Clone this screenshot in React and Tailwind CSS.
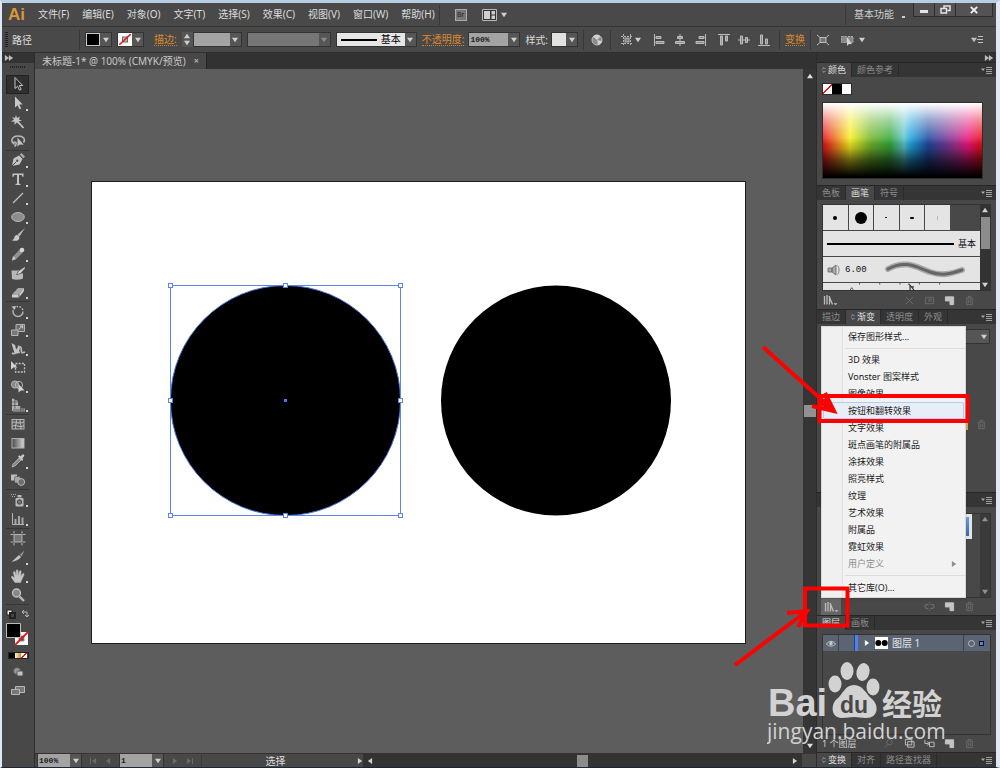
import clsx from 'clsx'

const MENUS = [
  '文件(F)',
  '编辑(E)',
  '对象(O)',
  '文字(T)',
  '选择(S)',
  '效果(C)',
  '视图(V)',
  '窗口(W)',
  '帮助(H)',
]

const LIBRARY_ITEMS = [
  '3D 效果',
  'Vonster 图案样式',
  '图像效果',
  '按钮和翻转效果',
  '文字效果',
  '斑点画笔的附属品',
  '涂抹效果',
  '照亮样式',
  '纹理',
  '艺术效果',
  '附属品',
  '霓虹效果',
]

// Tools as they are grouped between the separators of the bar.
const TOOL_GROUPS = [
  { height: 'h-[76px]', tools: ['select', 'direct', 'wand', 'lasso'] },
  {
    height: 'h-[151px]',
    tools: ['pen', 'type', 'line', 'ellipse', 'brush', 'pencil', 'blob', 'eraser'],
  },
  {
    height: 'h-[113px]',
    tools: ['rotate', 'scale', 'warp', 'transform', 'builder', 'perspective'],
  },
  { height: 'h-[75px]', tools: ['mesh', 'gradient', 'dropper', 'blend'] },
  { height: 'h-[39px]', tools: ['spray', 'graph'] },
  { height: 'h-[76px]', tools: ['artboard', 'slice', 'hand', 'zoom'] },
]

const FLYOUTS = new Set([
  'direct', 'pen', 'type', 'line', 'ellipse', 'pencil', 'eraser', 'rotate', 'scale',
  'warp', 'builder', 'perspective', 'dropper', 'spray', 'graph', 'slice', 'hand',
])

const TOOL_ART = {
  select: <path d="M5 1.5v11l2.6-2.3 1.9 4 1.7-.8-1.9-3.9h3.4z" fill="#2a2a2a" stroke="#c4c4c4" />,
  direct: <path d="M5 1.5v11l2.6-2.3 1.9 4 1.7-.8-1.9-3.9h3.4z" fill="#c8c8c8" />,
  wand: (
    <>
      <path d="M6 1l1 3 3-1.6L8.800 5.500 12 6.500 8.800 7.500 9.500 10.500 6.800 8.500 4.500 11 4.600 7.800 1 7.500 4 5.600 2 3l3 .9z" fill="#c4c4c4" />
      <path d="M8.500 8.500l5 5.500" stroke="#c4c4c4" strokeWidth="1.800" />
    </>
  ),
  lasso: (
    <>
      <path d="M4.500 11C0 9 1.500 3 8 3c6 0 7.500 3.500 5.500 6.500M4.500 11c-1.500 0-1.500-2 .3-2s2 2.700-.3 4.500" fill="none" stroke="#b8b8b8" strokeWidth="1.600" />
      <path d="M7.500 4.500v9l2.200-2 4 .3z" fill="#c4c4c4" />
    </>
  ),
  pen: (
    <>
      <path d="M2 14l1.500-7.500L9 3.500l3.500 3.500L9.500 12.500z" fill="#c4c4c4" />
      <path d="M9.800 2.800L11.500 1 15 4.500l-1.700 1.800z" fill="#a8a8a8" />
      <path d="M2 14l4.500-4.500" stroke="#484848" />
      <circle cx="7.300" cy="8.700" r="1.100" fill="#444" />
    </>
  ),
  type: <path d="M2.500 2.500h11v3.200h-1l-.8-1.700H9v8.400l1.500.8v.8h-5v-.8L7 12.400V4H4.300l-.8 1.700h-1z" fill="#c4c4c4" />,
  line: <path d="M3 13L13 3" stroke="#c0c0c0" strokeWidth="1.300" />,
  ellipse: <ellipse cx="8" cy="8" rx="6.300" ry="4.500" fill="#8c8c8c" stroke="#b8b8b8" />,
  brush: (
    <>
      <path d="M15 1L7.500 7.500l2 2z" fill="#b8b8b8" />
      <path d="M8.500 8.500C6 6.800 4.500 9 4.200 11c-.3 1.500-1.700 2-2.700 2 3 1.500 7.500 1 7.800-1.500.1-1 0-2-.8-3z" fill="#c8c8c8" />
    </>
  ),
  pencil: (
    <>
      <path d="M2 14.500l1-4L10 3.300l3 3-7 7z" fill="#909090" />
      <path d="M2 14.500l1-4 1.500.5.500 1.600 1 .5z" fill="#c8c8c8" />
      <circle cx="12" cy="4" r="2.300" fill="#d4d4d4" />
    </>
  ),
  blob: (
    <>
      <path d="M1.500 5.500H9v3h4v5c-3 1.500-8 1.500-11 .5z" fill="#b8b8b8" />
      <path d="M15 1.500L8.500 6 6.500 9.800l4-1.300 4.500-5z" fill="#d4d4d4" stroke="#484848" strokeWidth=".7" />
    </>
  ),
  eraser: (
    <>
      <path d="M2 10.500L8 4h6l-5 6.500z" fill="#a8a8a8" />
      <path d="M2 10.500h7L14 4v3l-5 6.500H2z" fill="#d0d0d0" />
      <path d="M9 10.500v3" stroke="#555" />
    </>
  ),
  rotate: (
    <>
      <circle cx="8" cy="8.500" r="5" fill="none" stroke="#b4b4b4" strokeWidth="1.500" strokeDasharray="17 1.500 1.500 1.500 1.500 1.500 1.500 1.500 1.500 1.500" />
      <path d="M1.500 3.500l4.500-.5-1.500 4z" fill="#c0c0c0" />
    </>
  ),
  scale: (
    <>
      <path d="M6 2.500h8.500v7H6z" fill="#6a6a6a" stroke="#b4b4b4" />
      <path d="M1.500 8H8v5.500H1.500z" fill="#777" stroke="#b4b4b4" />
      <path d="M8.500 7.500l4-3.500M10 4h2.700v2.500" fill="none" stroke="#d0d0d0" />
    </>
  ),
  warp: (
    <>
      <path d="M2 12c2.500 2 4-1 5-3s3-5 4-2-1 6 4 4" fill="none" stroke="#b8b8b8" strokeWidth="1.800" />
      <path d="M1.500 2l3.500 2 1 4 2.500 3-4 .5-1.500-4zM8 3.500l2 4.500-2.500 3M4 13l5-4 1 3z" fill="#c4c4c4" />
    </>
  ),
  transform: (
    <>
      <rect x="5.500" y="4.500" width="9" height="8.500" fill="none" stroke="#c0c0c0" strokeWidth="1.300" strokeDasharray="2 1.200" />
      <path d="M1 2v8.500L3.400 8.500l4 .1z" fill="#d0d0d0" />
    </>
  ),
  builder: (
    <>
      <circle cx="5" cy="6.500" r="3.600" fill="#888" stroke="#b8b8b8" />
      <circle cx="9" cy="7" r="3.600" fill="none" stroke="#b8b8b8" />
      <path d="M8.500 6v8.500l2.400-2 3.600.1z" fill="#d4d4d4" />
    </>
  ),
  perspective: (
    <>
      <path d="M2 1.500l2.500.6v12H2zM5.300 3L8 4v10H5.300z" fill="#b4b4b4" />
      <path d="M8 9h2.500v5H8zM3 11.500h12v3H3z" fill="#a8a8a8" />
      <path d="M2 5h6M2 8.500h8M10.700 9v5.500M13 11.500v3M3 13h12" stroke="#505050" strokeWidth=".7" />
    </>
  ),
  mesh: (
    <>
      <rect x="2" y="3.500" width="12" height="9.500" fill="#5a5a5a" stroke="#b4b4b4" />
      <path d="M2 7c3-3 5 2 12-1M2 10.500c4-3 7 2 12-1M6 3.500c2 3-2 6 0 9.500M10.500 3.500c-2 4 2 6 0 9.500" fill="none" stroke="#c4c4c4" />
    </>
  ),
  gradient: (
    <>
      <defs>
        <linearGradient id="tool-gradient">
          <stop offset="0" stopColor="#4a4a4a" />
          <stop offset="1" stopColor="#d8d8d8" />
        </linearGradient>
      </defs>
      <rect x="2" y="3.500" width="12" height="9.500" fill="url(#tool-gradient)" stroke="#b0b0b0" />
    </>
  ),
  dropper: (
    <>
      <path d="M2 14l1-3 6-6 2 2-6 6z" fill="#8a8a8a" stroke="#b8b8b8" strokeWidth=".8" />
      <path d="M8 3.500l1.200-1.200 1.300 1L12.500 1.500c1-.6 2.300.8 1.600 1.800L12.300 5.500l1 1.200L12 8z" fill="#c8c8c8" />
    </>
  ),
  blend: (
    <>
      <rect x="1" y="2.500" width="6" height="6" fill="#bcbcbc" />
      <rect x="4.500" y="4.500" width="6" height="6.500" rx="1.500" fill="#a4a4a4" stroke="#555" strokeWidth=".6" />
      <circle cx="11.200" cy="10" r="3.400" fill="#6c6c6c" stroke="#bcbcbc" />
    </>
  ),
  spray: (
    <>
      <rect x="5.500" y="6" width="8" height="8.500" rx="1" fill="#b8b8b8" />
      <path d="M7.500 3h4v2.500h-4z" fill="#b8b8b8" />
      <circle cx="9.500" cy="10" r="2.200" fill="#777" stroke="#444" />
      <path d="M1 2.500h1M3 2.500h1M5 2.500h1M2 4.500h1M4 4.500h1" stroke="#aaa" />
    </>
  ),
  graph: (
    <>
      <path d="M2.500 2v11.500H14" fill="none" stroke="#b4b4b4" />
      <path d="M4.500 8h2v5h-2zM8 5h2v8H8zM11.500 6.500h2V13h-2z" fill="#a8a8a8" />
    </>
  ),
  artboard: (
    <>
      <rect x="4" y="4.500" width="8" height="7.500" fill="#777" stroke="#b4b4b4" />
      <path d="M4 1v2.500M12 1v2.500M4 13v2.500M12 13v2.500M.5 4.500H3M13 4.500h2.500M.5 12H3M13 12h2.500" stroke="#b4b4b4" />
    </>
  ),
  slice: (
    <>
      <path d="M1.500 13L9 6l2 2c-2 3-6 4-9.500 5z" fill="#c4c4c4" />
      <path d="M10 5.500l4.500-4-3 6z" fill="#9a9a9a" />
    </>
  ),
  hand: (
    <path
      d="M5 14.500L1.500 9.500c-.4-1 .7-1.500 1.500-.8L4.700 10 3.400 4.600c-.2-1.100 1.200-1.500 1.600-.4L6.300 8 6.200 2.700c0-1.200 1.600-1.200 1.700 0L8.500 8l1-4.700c.3-1.100 1.700-.8 1.600.3L10.700 8.600 12.500 6c.7-.9 1.900-.3 1.500.8L12 11l-1.500 3.500z"
      fill="#c4c4c4"
      stroke="#c4c4c4"
      strokeWidth=".5"
    />
  ),
  zoom: (
    <>
      <circle cx="6.500" cy="6" r="4" fill="#888" stroke="#c4c4c4" strokeWidth="1.300" />
      <path d="M9.500 9.500l4.500 4.500" stroke="#b8b8b8" strokeWidth="2.400" />
    </>
  ),
}

function Arrow({ dir = 'down', className = 'fill-[#d0d0d0]' }) {
  const d = {
    down: 'M0 1h7L3.500 6z',
    up: 'M0 6h7L3.500 1z',
    left: 'M6 0v7L1 3.500z',
    right: 'M1 0v7l5-3.500z',
  }[dir]
  return (
    <svg viewBox="0 0 7 7" className={clsx('h-[6px] w-[6px] shrink-0', className)} aria-hidden="true">
      <path d={d} />
    </svg>
  )
}

function Divider() {
  return <span className="h-5 w-px shrink-0 bg-[#383838]" />
}

function Combo({ label, value, box, className, arrow, children }) {
  return (
    <label className={clsx('relative flex h-[15px] shrink-0 border border-[#333]', className)}>
      <select
        aria-label={label}
        defaultValue={value}
        className={clsx(
          'min-w-0 flex-1 appearance-none px-px font-[Liberation_Mono,monospace] text-[8px] leading-3 font-bold text-[#1c1c1c] outline-none',
          box
        )}
      >
        <option>{value}</option>
      </select>
      {children}
      <span className="pointer-events-none flex w-[11px] items-center justify-center bg-[#565656]">
        <Arrow className={arrow} />
      </span>
    </label>
  )
}

function SwatchButton({ label, className, children }) {
  return (
    <button type="button" aria-label={label} className="flex h-[15px] w-[27px] shrink-0 border border-[#333]">
      <span className={clsx('h-[13px] w-[14px] border', className)}>{children}</span>
      <span className="flex h-[13px] w-[11px] items-center justify-center bg-[#565656]">
        <Arrow />
      </span>
    </button>
  )
}

function NoneMark() {
  return (
    <svg viewBox="0 0 12 11" className="h-full w-full" aria-hidden="true">
      <rect x="3.500" y="3" width="5" height="5" fill="#bbb" stroke="#666" />
      <path d="M0 11L12 0" stroke="#f01818" strokeWidth="1.600" />
    </svg>
  )
}

function BarIcon({ label, children }) {
  return (
    <button type="button" aria-label={label} className="h-[14px] w-[14px] shrink-0">
      <svg viewBox="0 0 14 14" fill="none" stroke="#bdbdbd" className="h-full w-full">
        {children}
      </svg>
    </button>
  )
}

function MenuBar() {
  return (
    <header className="flex h-6 shrink-0 items-center border-b border-[#343434] bg-[#494949] pl-[6px]">
      <h1 className="w-[30px] font-[Liberation_Sans,sans-serif] text-[17px] leading-5 font-bold text-[#d8953c]">Ai</h1>
      <nav className="flex gap-[13px] text-[10px] text-[#dcdcdc]">
        {MENUS.map((menu) => (
          <button key={menu} type="button" className="whitespace-nowrap">
            {menu}
          </button>
        ))}
      </nav>
      <div className="ml-1 flex items-center gap-[15px]">
        <Divider />
        <button type="button" aria-label="Bridge" className="flex h-3 w-3 items-center justify-center border border-[#aaa] bg-[#777] text-[7px] leading-none text-[#222]">
          Br
        </button>
        <button type="button" aria-label="排列文档" className="flex items-center gap-1">
          <svg viewBox="0 0 15 12" className="h-3 w-[15px]" aria-hidden="true">
            <path d="M.5.5h14v11H.5z" fill="#333" stroke="#b8b8b8" />
            <path d="M2 2h6v8H2zM9.500 2H13v3.500H9.500zM9.500 6.500H13V10H9.500z" fill="#cfcfcf" />
          </svg>
          <Arrow />
        </button>
      </div>
      <div className="ml-auto flex items-center gap-2 self-stretch">
        <Divider />
        <button type="button" className="flex items-center gap-2 text-[10px] text-[#cfcfcf]">
          基本功能
          <span className="mt-1 h-[2px] w-[3px] bg-[#cfcfcf]" />
        </button>
      </div>
      <div className="mr-[3px] ml-2 flex h-[14px] self-start border border-t-0 border-[#2e2e2e] bg-[#535353]">
        <button type="button" aria-label="最小化" className="flex w-[21px] items-center justify-center border-r border-[#2e2e2e]">
          <span className="mt-1 h-[3px] w-2 bg-[#e4e4e4]" />
        </button>
        <button type="button" aria-label="还原" className="flex w-[21px] items-center justify-center border-r border-[#2e2e2e]">
          <svg viewBox="0 0 11 9" className="h-[9px] w-[11px]" fill="none" stroke="#e4e4e4" strokeWidth="1.500">
            <path d="M4 3V1h6v4.500H7.500M1 3.500h5.500V8H1z" />
          </svg>
        </button>
        <button type="button" aria-label="关闭" className="flex w-9 items-center justify-center">
          <svg viewBox="0 0 8 8" className="h-2 w-2" stroke="#f0f0f0" strokeWidth="1.900">
            <path d="M.8.8l6.400 6.400M7.200.8L.8 7.200" />
          </svg>
        </button>
      </div>
    </header>
  )
}

function LinkLabel({ children }) {
  return (
    <a href="#" className="shrink-0 border-b border-dotted border-[#d0812a] text-[10px] leading-3 text-[#dd8a2e]">
      {children}
    </a>
  )
}

function ControlBar() {
  return (
    <div className="flex h-[26px] shrink-0 items-center border-b border-[#2e2e2e] bg-[#494949] pl-[3px] text-[10px] text-[#dcdcdc]">
      <span className="h-4 w-[3px] bg-[repeating-linear-gradient(#222_0_1px,transparent_1px_2px)]" />
      <span className="ml-1 w-[67px] leading-3">路径</span>
      <Divider />
      <div className="ml-[5px] flex items-center gap-[5px]">
        <SwatchButton label="填色" className="border-[#ccc] bg-black" />
        <SwatchButton label="描边颜色" className="border-white bg-white">
          <NoneMark />
        </SwatchButton>
      </div>
      <div className="ml-[10px] flex items-center gap-[5px]">
        <LinkLabel>描边:</LinkLabel>
        <div className="flex">
          <div className="flex w-[11px] flex-col items-center justify-between bg-[#565656] py-px">
            <button type="button" aria-label="增加">
              <Arrow dir="up" />
            </button>
            <button type="button" aria-label="减少">
              <Arrow />
            </button>
          </div>
          <Combo label="描边粗细" value="" box="bg-[#a3a3a3]" className="w-[49px]" />
        </div>
        <Combo label="变量宽度" value="" box="bg-[#767676]" className="w-[84px]" arrow="fill-[#8a8a8a]" />
        <Combo label="画笔定义" value="" box="bg-[#e6e6e6]" className="w-[81px]">
          <span className="pointer-events-none absolute inset-y-0 left-1 flex items-center gap-1 text-[10px] text-black">
            <span className="h-[2px] w-9 bg-black" />
            基本
          </span>
        </Combo>
      </div>
      <div className="ml-[5px] flex items-center gap-1">
        <LinkLabel>不透明度:</LinkLabel>
        <Combo label="不透明度" value="100%" box="bg-[#a3a3a3]" className="w-[52px]" />
      </div>
      <div className="ml-[5px] flex items-center gap-[3px]">
        <span className="leading-3">样式:</span>
        <SwatchButton label="图形样式" className="border-[#e2e2e2] bg-[#e2e2e2]" />
      </div>
      <div className="ml-[5px] flex items-center gap-[6px]">
        <Divider />
        <BarIcon label="重新着色">
          <circle cx="7" cy="7" r="5" fill="#8a8a8a" />
          <path d="M7 7L3 3.500A5 5 0 0110.500 3.500zM7 7l5 1a5 5 0 01-4 4z" fill="#d0d0d0" stroke="none" />
        </BarIcon>
        <Divider />
        <button type="button" aria-label="对齐选项" className="ml-[3px] flex items-center gap-px">
          <svg viewBox="0 0 14 14" className="h-[14px] w-[14px]" fill="none" stroke="#b0b0b0">
            <path d="M1 3.500h12M1 10.500h12M3.500 1v12M10.500 1v12" strokeDasharray="2 1" />
            <rect x="5" y="5" width="4" height="4" fill="#888" />
          </svg>
          <Arrow />
        </button>
      </div>
      <div className="ml-3 flex gap-[6px]">
        <BarIcon label="左对齐">
          <path d="M1.500 1v12" />
          <path d="M3 3.500h5v2H3zM3 8.500h8v2H3z" fill="#888" />
        </BarIcon>
        <BarIcon label="水平居中">
          <path d="M7 1v12" />
          <path d="M4.500 3.500h5v2h-5zM2.500 8.500h9v2h-9z" fill="#999" />
        </BarIcon>
        <BarIcon label="右对齐">
          <path d="M12.500 1v12" />
          <path d="M6 3.500h5v2H6zM3 8.500h8v2H3z" fill="#888" />
        </BarIcon>
      </div>
      <div className="ml-[10px] flex gap-[6px]">
        <BarIcon label="顶对齐">
          <path d="M1 1.500h12" />
          <path d="M3.500 3v9h2V3zM8.500 3v5h2V3z" fill="#999" />
        </BarIcon>
        <BarIcon label="垂直居中">
          <path d="M1 7h12" />
          <path d="M3.500 3v8h2V3zM8.500 4.500v5h2v-5z" fill="#888" />
        </BarIcon>
        <BarIcon label="底对齐">
          <path d="M1 12.500h12" />
          <path d="M3.500 2v9h2V2zM8.500 6v5h2V6z" fill="#888" />
        </BarIcon>
      </div>
      <div className="ml-2 flex items-center gap-[5px]">
        <Divider />
        <LinkLabel>变换</LinkLabel>
        <Divider />
      </div>
      <div className="ml-[5px] flex items-center gap-[10px]">
        <BarIcon label="隔离">
          <rect x="4" y="4.500" width="6" height="5" fill="#777" />
          <path d="M1 2l2.500 2M13 2l-2.500 2M1 12l2.500-2M13 12l-2.500-2" />
        </BarIcon>
        <button type="button" aria-label="选择类似" className="flex items-center gap-1">
          <svg viewBox="0 0 15 14" className="h-[14px] w-[15px]" stroke="#b0b0b0">
            <path d="M1.500 3.500h5v6h-5zM8 3.500h5v6H8z" fill="#888" strokeDasharray="2 1" />
            <path d="M7 4v9l2-2 3 .3z" fill="#d4d4d4" stroke="none" />
          </svg>
          <Arrow />
        </button>
      </div>
      <button type="button" aria-label="面板菜单" className="mr-3 ml-auto flex items-center">
        <Arrow className="fill-[#c0c0c0]" />
        <svg viewBox="0 0 7 9" className="h-[9px] w-[7px]" stroke="#c0c0c0">
          <path d="M1 1.500h5M0 4.500h6M1 7.500h5" />
        </svg>
      </button>
    </div>
  )
}

function ToolBar() {
  return (
    <aside className="flex w-8 shrink-0 flex-col bg-[#484848]">
      <div className="flex h-[10px] shrink-0 items-center bg-[#333] pl-[2px]">
        <Arrow dir="right" className="-mr-[2px] fill-[#bbb]" />
        <Arrow dir="right" className="fill-[#bbb]" />
      </div>
      <div className="mx-auto mt-[3px] mb-[7px] h-[2px] w-4 bg-[repeating-linear-gradient(90deg,#222_0_1px,transparent_1px_2px)]" />
      {TOOL_GROUPS.map((group) => (
        <div
          key={group.tools[0]}
          className={clsx('mr-[5px] ml-1 flex shrink-0 flex-col border-b border-[#363636]', group.height)}
        >
          {group.tools.map((tool) => (
            <button
              key={tool}
              type="button"
              aria-label={tool}
              className={clsx(
                'relative flex min-h-0 flex-1 items-center justify-center',
                tool === 'select' && 'bg-[#2f2f2f] outline -outline-offset-1 outline-[#222]'
              )}
            >
              <svg viewBox="0 0 16 16" className="h-4 w-4" fill="none">
                {TOOL_ART[tool]}
              </svg>
              {FLYOUTS.has(tool) && (
                <span className="absolute right-px bottom-[2px] h-[2px] w-[2px] bg-[#d0d0d0]" />
              )}
            </button>
          ))}
        </div>
      ))}
      <svg viewBox="0 0 24 42" className="mx-auto mt-1 h-[42px] w-6 shrink-0" role="img" aria-label="填色和描边">
        <path d="M1 1h5v5H1z" fill="#eee" stroke="#222" />
        <path d="M4 4h5v5H4z" fill="none" stroke="#222" strokeWidth="2" />
        <path d="M16 3h5v5M18 1l-2 2 2 2M19 6l2 2 2-2" fill="none" stroke="#b8b8b8" />
        <path d="M9 23h13v13H9z" fill="#fff" />
        <path d="M13 27h5v5h-5z" fill="#4a4a4a" stroke="#999" />
        <path d="M9 36L22 23" stroke="#f01818" strokeWidth="1.800" />
        <path d="M.5 14.500h14v14H.5z" fill="#000" stroke="#bbb" />
      </svg>
      <div className="mx-auto mt-px flex h-[7px] w-[21px] shrink-0 border border-[#222]">
        <button type="button" aria-label="颜色" className="flex-1 bg-black" />
        <button type="button" aria-label="渐变" className="flex-1 bg-linear-to-r from-[#fff2cf] to-[#c78c35]" />
        <button type="button" aria-label="无" className="flex-1 bg-[linear-gradient(135deg,#fff_40%,#f01818_40%_60%,#fff_60%)]" />
      </div>
      <button type="button" aria-label="绘图模式" className="mx-auto mt-[6px] h-[14px] w-4 shrink-0">
        <svg viewBox="0 0 16 14" className="h-full w-full">
          <circle cx="7" cy="6" r="3.500" fill="#999" stroke="#555" />
          <rect x="7" y="6" width="6" height="5" rx="1" fill="#c0c0c0" stroke="#555" />
        </svg>
      </button>
      <button type="button" aria-label="屏幕模式" className="mx-auto mt-[5px] h-[14px] w-4 shrink-0">
        <svg viewBox="0 0 16 14" className="h-full w-full" fill="#777" stroke="#b8b8b8">
          <path d="M5.500 2.500h9v6h-9z" />
          <path d="M1.500 5.500h8v5h-8z" />
        </svg>
      </button>
    </aside>
  )
}

const HANDLES = [
  [79, 104], [194, 104], [309, 104],
  [79, 219], [309, 219],
  [79, 334], [194, 334], [309, 334],
]

function Artboard() {
  return (
    <svg viewBox="0 0 656 463" className="mt-[2px] h-[463px] w-[656px] shrink-0" role="img" aria-label="画板 1">
      <rect x=".5" y=".5" width="654" height="462" fill="#fff" stroke="#1e1e1e" />
      <circle cx="194.500" cy="219.500" r="115" fill="#000" stroke="#4a74d8" />
      <circle cx="465" cy="219.500" r="115" fill="#000" />
      <rect x="79.500" y="104.500" width="230" height="230" fill="none" stroke="#5a86e8" />
      {HANDLES.map(([x, y]) => (
        <rect key={`${x}-${y}`} x={x - 1.5} y={y - 1.5} width="4" height="4" fill="#fff" stroke="#5a86e8" />
      ))}
      <rect x="193" y="218" width="3" height="3" fill="#4a74ff" />
    </svg>
  )
}

function StepButton({ label, dir, edge }) {
  return (
    <button type="button" aria-label={label} className={clsx('h-[6px] border-[#6a6a6a]', edge)}>
      <Arrow dir={dir} className="fill-[#6a6a6a]" />
    </button>
  )
}

function StatusBar() {
  return (
    <footer className="flex h-[14px] shrink-0 items-center border-t border-[#333] bg-[#484848]">
      <div className="flex w-[328px] shrink-0 items-center gap-2 pl-[2px]">
        <Combo label="缩放" value="100%" box="bg-[#a3a3a3]" className="h-[13px] w-[45px]" />
        <StepButton label="首项" dir="left" edge="border-l" />
        <StepButton label="上一项" dir="left" />
        <Combo label="画板导航" value="1" box="bg-[#a3a3a3]" className="h-[13px] w-[45px]" />
        <StepButton label="下一项" dir="right" />
        <StepButton label="末项" dir="right" edge="border-r" />
        <span className="flex-1 border-l border-[#3a3a3a] text-center text-[10px] leading-3 text-[#ddd]">选择</span>
        <Arrow dir="right" />
      </div>
      <div className="flex h-full flex-1 items-center justify-between bg-[#333] px-1">
        <Arrow dir="left" />
        <span className="h-3 w-[11px] bg-[#8c8c8c]" />
        <Arrow dir="right" />
      </div>
      <span className="w-[14px]" />
    </footer>
  )
}

function Document() {
  return (
    <main className="flex min-w-0 flex-1 flex-col border-x border-[#2c2c2c]">
      <div className="flex h-4 shrink-0 bg-[#323232]">
        <div className="flex items-center gap-2 border-r border-[#262626] bg-[#484848] px-[7px] text-[10px] text-[#c8c8c8]">
          <span className="leading-3">未标题-1* @ 100% (CMYK/预览)</span>
          <button type="button" aria-label="关闭文档" className="text-[9px] leading-3">
            ×
          </button>
        </div>
      </div>
      <div className="flex min-h-0 flex-1">
        <div className="flex min-w-0 flex-1 items-center justify-center overflow-hidden bg-[#5d5d5d]">
          <Artboard />
        </div>
        <div className="flex w-[13px] shrink-0 flex-col items-center justify-between bg-[#353535] py-1">
          <Arrow dir="up" className="fill-[#e0e0e0]" />
          <span className="h-3 w-3 bg-[#919191]" />
          <Arrow className="fill-[#e0e0e0]" />
        </div>
      </div>
      <StatusBar />
    </main>
  )
}

function PanelTabs({ tabs, active }) {
  return (
    <div className="flex h-[15px] shrink-0 border-t border-[#262626] bg-[#353535] text-[9px] text-[#8c8c8c]">
      {tabs.map((tab) => (
        <button
          key={tab}
          type="button"
          className={clsx(
            'flex items-center gap-[2px] border-r border-[#2a2a2a] px-[5px] whitespace-nowrap',
            tab === active && 'bg-[#484848] text-[#dedede]'
          )}
        >
          {tab === active && tab !== '画笔' && tab !== '图层' && (
            <svg viewBox="0 0 5 8" className="h-2 w-[4px]" fill="none" stroke="#bbb">
              <path d="M.5 3l2-2 2 2M.5 5l2 2 2-2" />
            </svg>
          )}
          {tab}
        </button>
      ))}
      <button type="button" aria-label="面板菜单" className="mr-1 ml-auto flex items-center">
        <svg viewBox="0 0 11 8" className="h-2 w-[11px]" stroke="#aaa">
          <path d="M0 2.500h4L2 5z" fill="#aaa" stroke="none" />
          <path d="M5 1.500h6M5 3.500h6M5 5.500h6M5 7.500h6" strokeWidth=".9" />
        </svg>
      </button>
    </div>
  )
}

function LibraryIcon() {
  return (
    <svg viewBox="0 0 16 12" className="h-3 w-4" fill="none" stroke="#bdbdbd">
      <path d="M2.500 2v8.500M5 1v9.500M7 2l3.500 8.500M7.500 2.500v8" strokeWidth="1.300" />
      <path d="M12 9.500h3l-1.500 1.500z" fill="#bdbdbd" strokeWidth=".5" />
    </svg>
  )
}

function FootIcon({ name, dim = true }) {
  const art = {
    cut: <path d="M2 2l8 8M10 2L2 10" />,
    options: <path d="M1.500 2.500h9v7h-9zM4 4.500h5M4 6.500h5" />,
    link: <path d="M5 4H3a2 2 0 000 4h2M7 4h2a2 2 0 010 4H7M6 1v1.500M6 9.500V11" strokeWidth="1.300" />,
    fresh: <path d="M1.500 2h9v8.500h-4v-4h-5z" fill="currentColor" />,
    trash: <path d="M2 3.500h8M4.500 3V1.500h3V3M3 4v6.500h6V4M5 5v4M7 5v4" />,
    find: <path d="M9 4.500a3 3 0 11-6 0 3 3 0 016 0zM4 7l-3 3.500" />,
    mask: <path d="M1.500 1.500h7v6h-7zM4 4h7v6H4z" />,
    sub: <path d="M1 2v4h4M3.500 4L6 6 3.500 8M6 4.500h5v5H6z" />,
  }[name]
  return (
    <button type="button" aria-label={name} className={dim ? 'text-[#6c6c6c]' : 'text-[#c4c4c4]'}>
      <svg viewBox="0 0 12 12" className="h-[11px] w-[11px]" fill="none" stroke="currentColor">
        {art}
      </svg>
    </button>
  )
}

function ColorPanel() {
  return (
    <section className="flex h-[123px] shrink-0 flex-col">
      <PanelTabs tabs={['颜色', '颜色参考']} active="颜色" />
      <div className="flex flex-1 flex-col gap-[7px] px-[5px] py-[6px]">
        <div className="flex h-3 w-[30px] border border-[#2c2c2c]">
          <button type="button" aria-label="无" className="flex-1 bg-[linear-gradient(135deg,#fff_44%,#f01818_44%_56%,#fff_56%)]" />
          <button type="button" aria-label="黑色" className="flex-1 bg-black" />
          <button type="button" aria-label="白色" className="flex-1 bg-white" />
        </div>
        <div className="mr-2 flex-1 border border-[#2e2e2e] bg-[linear-gradient(to_bottom,#fff_0%,#fff8_22%,#fff0_55%),linear-gradient(to_top,#000_2%,#0009_24%,#0003_40%,#0000_54%),linear-gradient(to_right,#e8101c_0%,#f7ef22_17%,#74b62b_30%,#35a83a_42%,#5ec4cc_51%,#1fa6e0_55%,#1d4aa0_66%,#6a3a98_76%,#a8308c_84%,#ee1580_91%,#e8101c_99%)]" />
      </div>
    </section>
  )
}

function BrushPanel() {
  return (
    <section className="flex h-[124px] shrink-0 flex-col">
      <PanelTabs tabs={['色板', '画笔', '符号']} active="画笔" />
      <div className="flex flex-1 flex-col px-[5px] pt-1">
        <div className="flex h-[87px] border border-[#333]">
          <div className="flex min-w-0 flex-1 flex-col overflow-hidden text-[#111]">
            <div className="flex h-[25px] w-[127px] shrink-0 gap-px">
              {['h-1 w-1', 'h-3 w-3', 'h-px w-[2px]', 'h-[2px] w-1', 'h-1 w-px opacity-20'].map((dot) => (
                <button key={dot} type="button" aria-label="画笔" className="flex flex-1 items-center justify-center bg-[#e4e4e4]">
                  <span className={clsx('rounded-full bg-black', dot)} />
                </button>
              ))}
            </div>
            <div className="mt-px flex h-[25px] shrink-0 items-center gap-1 bg-[#e4e4e4] px-1 text-[9px]">
              <span className="h-[2px] flex-1 bg-black" />
              基本
            </div>
            <div className="mt-px flex h-[25px] shrink-0 items-center bg-[#e4e4e4] pl-1 text-[9px]">
              <svg viewBox="0 0 14 12" className="h-3 w-[14px]" fill="#aaa" stroke="#666" strokeWidth=".8">
                <path d="M1 4h4v4H1zM5 4l4-3v10L5 8z" />
                <path d="M10.500 1.500c2 2 2 7 0 9" fill="none" />
              </svg>
              <span className="ml-1 font-[Liberation_Mono,monospace] leading-3">6.00</span>
              <svg viewBox="0 0 84 20" className="ml-4 h-5 w-[84px]" fill="none" strokeLinecap="round">
                <path d="M5 9c18-10 30-1 42 3s20 2 32-2" stroke="#aaa" strokeWidth="6" />
                <path d="M5 9c18-10 30-1 42 3s20 2 32-2" stroke="#666" strokeWidth="3" />
              </svg>
            </div>
            <svg viewBox="0 0 158 9" className="mt-px h-[9px] w-full bg-[#e4e4e4]" fill="none" stroke="#333">
              <path d="M25 0v2M51 0v2M77 0v2M102 0v2M128 0v2M13 9l2-3 2 3" />
              <path d="M88 1l3 3 4 5M90 4v5M91 5h4" strokeWidth="1.500" />
            </svg>
          </div>
          <div className="flex w-[10px] shrink-0 flex-col items-center bg-[#333] py-[2px]">
            <Arrow dir="up" />
            <span className="mt-1 h-8 w-[9px] bg-[#8c8c8c]" />
            <Arrow className="mt-auto fill-[#d0d0d0]" />
          </div>
        </div>
        <div className="flex flex-1 items-center justify-end gap-[9px] pr-4">
          <button type="button" aria-label="画笔库菜单" className="mr-auto">
            <LibraryIcon />
          </button>
          <FootIcon name="cut" />
          <FootIcon name="options" />
          <FootIcon name="fresh" dim={false} />
          <FootIcon name="trash" />
        </div>
      </div>
    </section>
  )
}

function GradientPanel() {
  return (
    <section className="flex h-[183px] shrink-0 flex-col">
      <PanelTabs tabs={['描边', '渐变', '透明度', '外观']} active="渐变" />
      <div className="flex flex-1 flex-col px-[6px] pt-[5px]">
        <Combo label="类型" value="" box="bg-[#555]" className="ml-auto w-[100px]" />
        <div className="mt-[75px] flex items-center">
          <span className="h-[11px] w-[145px] bg-linear-to-r from-white to-[#d8a840]" />
          <span className="ml-2 flex">
            <FootIcon name="trash" />
          </span>
        </div>
      </div>
    </section>
  )
}

function LibraryMenu() {
  return (
    <div
      role="menu"
      className="absolute bottom-full left-0 z-10 flex w-[145px] flex-col border border-[#d8d8d8] bg-[linear-gradient(to_right,#f0f0f0_20px,#e2e2e2_20px_21px,#f2f2f2_21px)] py-px text-[9px] text-[#1a1a1a] shadow-sm"
    >
      <button type="button" role="menuitem" className="h-[17px] pl-[26px] text-left">
        保存图形样式...
      </button>
      <hr className="mt-[3px] mb-[2px] ml-[23px] border-[#dedede]" />
      {LIBRARY_ITEMS.map((item) => (
        <button
          key={item}
          type="button"
          role="menuitem"
          className={clsx(
            'mx-px h-[17px] pl-[25px] text-left whitespace-nowrap',
            item === '按钮和翻转效果' && 'rounded-xs bg-[#e8eef8] outline -outline-offset-1 outline-[#aecff7]'
          )}
        >
          {item}
        </button>
      ))}
      <button type="button" role="menuitem" className="flex h-[17px] items-center justify-between pr-2 pl-[26px] text-[#8c8c8c]">
        用户定义
        <Arrow dir="right" className="fill-[#8c8c8c]" />
      </button>
      <hr className="my-[3px] ml-[23px] border-[#dedede]" />
      <button type="button" role="menuitem" className="h-[17px] pl-[26px] text-left">
        其它库(O)...
      </button>
    </div>
  )
}

function StylesPanel() {
  return (
    <section className="flex h-[123px] shrink-0 flex-col">
      <PanelTabs tabs={[]} />
      <div className="flex flex-1 flex-col pt-[6px] pr-[5px] pl-1">
        <div className="flex flex-1 justify-end border border-[#333]">
          <span className="mr-2 h-[25px] w-[25px] border-3 border-[#e4e4e4] bg-linear-to-br from-[#9fd4f4] to-[#3a62b4]" />
          <div className="flex w-[10px] flex-col items-center justify-between bg-[#3a3a3a] py-[2px]">
            <Arrow dir="up" className="fill-[#909090]" />
            <Arrow className="fill-[#909090]" />
          </div>
        </div>
        <div className="relative flex h-[17px] items-center justify-end gap-[9px] pr-4">
          <button type="button" aria-label="图形样式库菜单" aria-expanded="true" className="mr-auto flex h-full w-5 items-center justify-center bg-[#666]">
            <LibraryIcon />
          </button>
          <LibraryMenu />
          <FootIcon name="link" />
          <FootIcon name="fresh" dim={false} />
          <FootIcon name="trash" />
        </div>
      </div>
    </section>
  )
}

function LayersPanel() {
  return (
    <section className="flex min-h-0 flex-1 flex-col">
      <PanelTabs tabs={['图层', '画板']} active="图层" />
      <div className="flex min-h-0 flex-1 flex-col px-[5px] pt-1">
        <div className="flex-1 border border-[#333]">
          <div className="flex h-4 items-center bg-[#5a6473] text-[10px] text-[#e4e4e4]">
            <button type="button" aria-label="切换可视性" className="flex h-full w-4 items-center justify-center border-r border-[#3a4250]">
              <svg viewBox="0 0 10 7" className="h-[7px] w-[10px]" fill="none" stroke="#c8c8c8">
                <path d="M.5 4C2.500.500 7.500.500 9.500 4 7.500 6.800 2.500 6.800.500 4z" />
                <circle cx="5" cy="3.500" r="1.400" fill="#c8c8c8" />
              </svg>
            </button>
            <span className="h-full w-4 border-r border-[#3a4250]" />
            <span className="h-full w-[3px] bg-[#4a80ff]" />
            <span className="flex w-[17px] justify-center">
              <Arrow dir="right" className="fill-white" />
            </span>
            <svg viewBox="0 0 13 12" className="h-3 w-[13px] bg-white" aria-hidden="true">
              <circle cx="3.300" cy="6" r="3" />
              <circle cx="9.700" cy="6" r="3" />
            </svg>
            <span className="ml-1 flex-1 leading-3">图层 1</span>
            <span className="flex h-full w-[27px] items-center gap-1 border-l border-[#3a4250] pl-1">
              <span className="h-[7px] w-[7px] rounded-full border border-[#bbb]" />
              <span className="h-[5px] w-[5px] border border-[#111] bg-[#4a80ff]" />
            </span>
          </div>
        </div>
        <div className="flex h-[17px] shrink-0 items-center justify-end gap-[9px] pr-4">
          <span className="mr-auto text-[9px] leading-3 text-[#d0d0d0]">1 个图层</span>
          <FootIcon name="find" />
          <FootIcon name="mask" dim={false} />
          <FootIcon name="sub" dim={false} />
          <FootIcon name="fresh" dim={false} />
          <FootIcon name="trash" />
        </div>
      </div>
    </section>
  )
}

function Watermark() {
  return (
    <svg
      viewBox="0 0 184 92"
      className="pointer-events-none absolute right-[45px] bottom-[16px] h-[92px] w-[184px] fill-[#d2d2d2]"
    >
      <text x="1" y="57" className="font-[Liberation_Sans,sans-serif] text-[38px] font-bold">Bai</text>
      <ellipse cx="68" cy="25" rx="6.500" ry="8.500" />
      <ellipse cx="80" cy="12" rx="6.500" ry="9" />
      <ellipse cx="96" cy="13" rx="6.500" ry="9" transform="rotate(12 96 13)" />
      <ellipse cx="106" cy="28" rx="6.500" ry="8.500" />
      <path d="M87 26c-9 0-11 9-17 14-6 4-7 19 5 19 5 0 8-1 12-1s8 1 12 1c13 0 13-13 6-19-6-5-9-14-18-14z" />
      <text x="73" y="54" className="fill-[#484848] font-[Liberation_Sans,sans-serif] text-[23px] font-bold">du</text>
      <text x="115" y="56" className="font-[Noto_Sans_CJK_SC,sans-serif] text-[30px] font-bold">经验</text>
      <text x="0" y="80" className="font-[Open_Sans,sans-serif] text-[21px] font-medium">jingyan.baidu.com</text>
    </svg>
  )
}

function Annotations() {
  return (
    <svg
      viewBox="732 339 264 340"
      className="pointer-events-none absolute right-0 bottom-[88px] z-20 h-[340px] w-[264px]"
      fill="none"
      stroke="#f00"
      strokeWidth="4"
    >
      <rect x="819.500" y="396" width="148" height="25" />
      <rect x="805" y="588.500" width="42.500" height="37" />
      <path d="M763 347l69 62" />
      <path d="M812 406l22 5-9-18" />
      <path d="M818 404l16 8-8-15z" fill="#f00" stroke="none" />
      <path d="M735 665l72-54M787 613l20-2-9 16" />
    </svg>
  )
}

export default function App() {
  return (
    <div className="relative flex h-screen flex-col overflow-hidden border-t-3 border-r-4 border-b border-l-2 border-t-[#b9cde5] border-r-[#dfe8f4] border-b-[#1c2836] border-l-[#dfe8f4] bg-[#484848] font-[Noto_Sans,Noto_Sans_CJK_SC,sans-serif]">
      <MenuBar />
      <ControlBar />
      <div className="flex min-h-0 flex-1">
        <ToolBar />
        <Document />
        <aside className="flex w-[179px] shrink-0 flex-col bg-[#484848]">
          <div className="flex h-[9px] shrink-0 items-center justify-end bg-[#333] pr-[2px]">
            <Arrow dir="right" className="-mr-[2px] fill-[#bbb]" />
            <Arrow dir="right" className="fill-[#bbb]" />
          </div>
          <ColorPanel />
          <BrushPanel />
          <GradientPanel />
          <StylesPanel />
          <LayersPanel />
          <PanelTabs tabs={['变换', '对齐', '路径查找器']} active="变换" />
        </aside>
      </div>
      <Watermark />
      <Annotations />
    </div>
  )
}
